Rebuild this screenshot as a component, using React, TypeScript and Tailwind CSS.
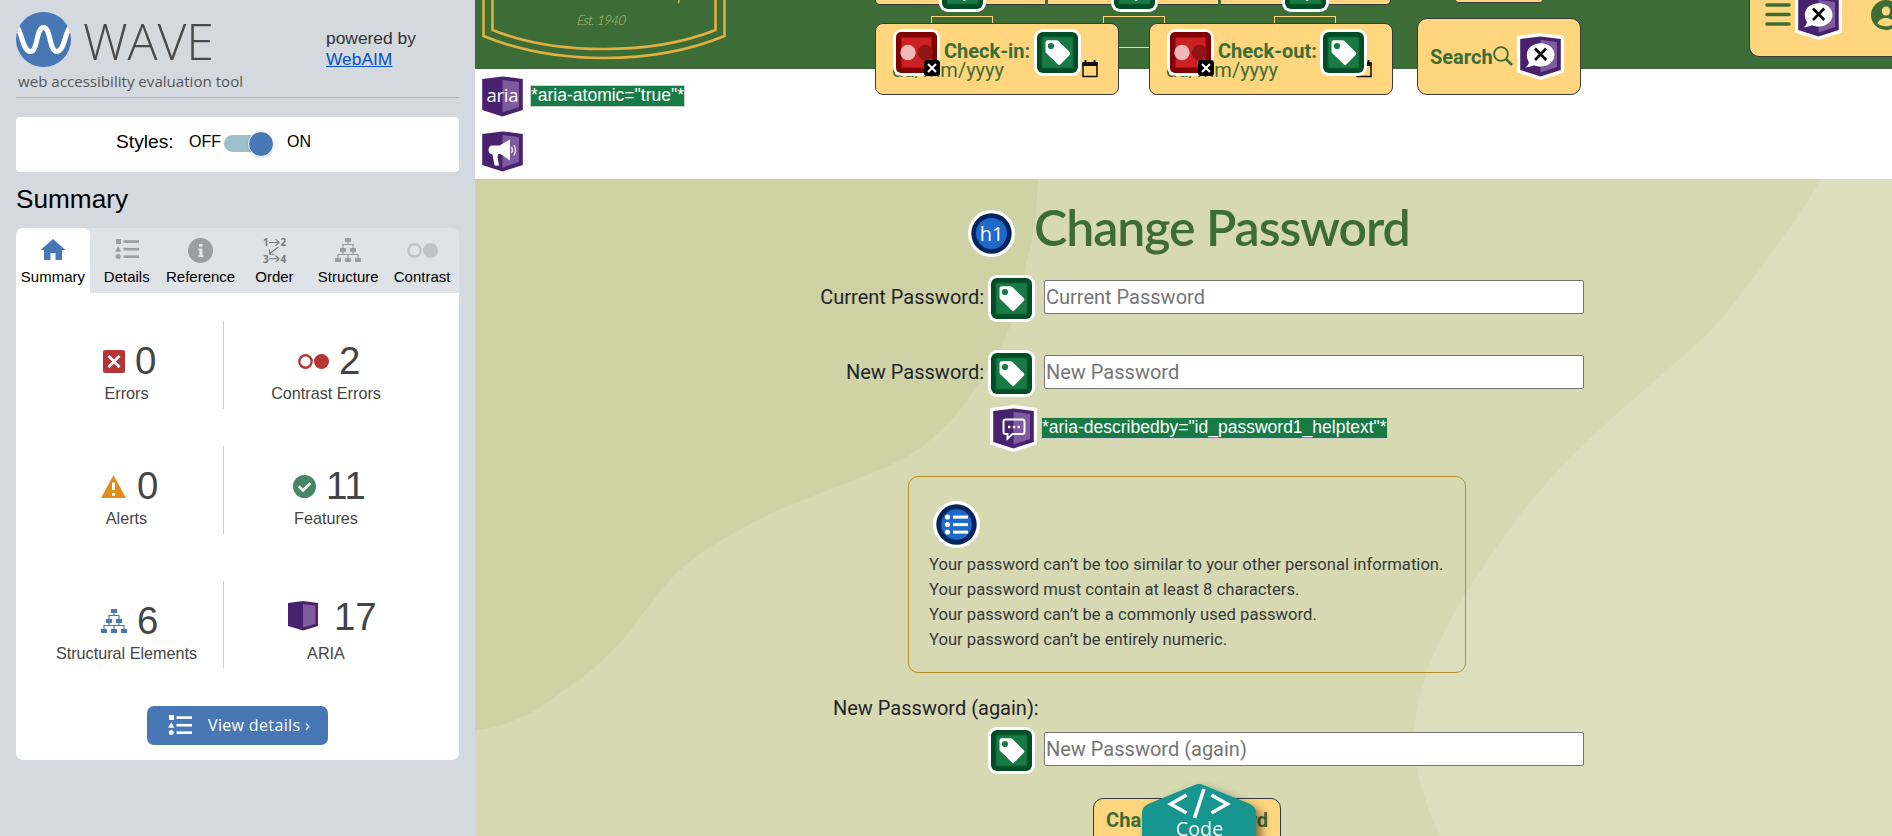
import React from "react";

const arial = "font-['Liberation_Sans',Arial,sans-serif]";
const openSans = "font-['Open_Sans','Noto_Sans',sans-serif]";

/* ---------- annotation icons ---------- */

function TagIcon({ className = "" }: { className?: string }) {
  return (
    <svg viewBox="0 0 47 47" className={`block h-[47px] w-[47px] shrink-0 ${className}`}>
      <rect width="47" height="47" rx="9" fill="#fff" />
      <rect x="3" y="3" width="41" height="41" rx="6" fill="#024c26" />
      <rect x="7.5" y="7.5" width="32" height="32" rx="1.5" fill="#0d6437" />
      <rect x="8.5" y="8.5" width="30" height="30" rx="1" fill="#187b46" />
      <path
        d="M11.5 13.5a2.2 2.2 0 0 1 2.2-2.2h8.7a3 3 0 0 1 2 .8L35.6 23a2.3 2.3 0 0 1 0 3.1l-8.8 9a2.3 2.3 0 0 1-3.3 0L12.4 24.3a3 3 0 0 1-.9-2.1z"
        fill="#fff"
      />
      <circle cx="17" cy="17" r="3.1" fill="#187b46" />
    </svg>
  );
}

function ContrastErrorIcon({ className = "" }: { className?: string }) {
  return (
    <svg viewBox="0 0 47 47" className={`block h-[47px] w-[47px] shrink-0 ${className}`}>
      <rect width="47" height="47" rx="9" fill="#fff" />
      <rect x="3" y="3" width="41" height="41" rx="5" fill="#800204" />
      <rect x="8.5" y="8.5" width="30" height="30" rx="1" fill="#cd2022" />
      <circle cx="15" cy="23.5" r="7.7" fill="#f0b9b9" />
      <circle cx="32.3" cy="23.5" r="7.7" fill="#8e1416" />
      <rect x="31" y="31" width="16" height="16" rx="3" fill="#000" />
      <path d="M35 35l8 8M43 35l-8 8" stroke="#fff" strokeWidth="2" />
    </svg>
  );
}

function AriaShape({ children, className = "" }: { children?: React.ReactNode; className?: string }) {
  return (
    <svg viewBox="0 0 47 47" className={`block h-[47px] w-[47px] shrink-0 ${className}`}>
      <path d="M0 3L23.5 0L47 3V39.5L23.5 47L0 39.5z" fill="#fff" />
      <path d="M3.2 6L23.5 3.4L43.8 6V37L23.5 43.4L3.2 37z" fill="#48226f" />
      <path d="M23.5 7L40 9V34L23.5 39.5z" fill="#7e5a9e" />
      {children}
    </svg>
  );
}

function AriaLabelIcon({ className = "" }: { className?: string }) {
  return (
    <AriaShape className={className}>
      <path
        d="M23.7 10.2c7.8 0 13.8 5 13.8 11.6s-6 11.8-13.8 11.8c-2.6 0-4.700-.5-6.700-1.300-1.800.9-4.800 1.900-8.500 2.100 2-1.500 3.300-3.400 3.500-5.200-1.400-2-2.200-4.600-2.200-7.400 0-6.600 6.100-11.600 13.900-11.600z"
        fill="#fff"
      />
      <path d="M18 15.500l11.200 11.500M29.200 15.500l-11.200 11.500" stroke="#000" strokeWidth="2.6" />
    </AriaShape>
  );
}

/* ---------- sidebar icons ---------- */

function ListShapes({ color, className = "" }: { color: string; className?: string }) {
  return (
    <svg viewBox="0 0 24 20" className={`block h-5 w-6 ${className}`} fill={color}>
      <rect x="1" y="0" width="5" height="5" />
      <path d="M3.200 7.200L6.300 12.700H0z" />
      <circle cx="3.200" cy="17.500" r="2.500" />
      <rect x="8.500" y="1.300" width="15.500" height="2.600" />
      <rect x="8.500" y="8.900" width="15.500" height="2.600" />
      <rect x="8.500" y="16.400" width="15.500" height="2.600" />
    </svg>
  );
}

function TreeIcon({ color }: { color: string }) {
  return (
    <svg viewBox="0 0 26 25" className="block h-[25px] w-[26px]">
      <path
        d="M13 3v3.500M8 12V6.500h10V12M3 21v-4.500h20V21M8 12v5M18 12v5M13 17v5"
        fill="none"
        stroke={color}
        strokeWidth="1.200"
      />
      <g fill={color}>
        <rect x="10" y="0" width="6" height="4" />
        <rect x="5" y="10" width="6" height="4" />
        <rect x="15" y="10" width="6" height="4" />
        <rect x="0" y="20" width="6" height="4" />
        <rect x="10" y="20" width="6" height="4" />
        <rect x="20" y="20" width="6" height="4" />
      </g>
    </svg>
  );
}

function TwoCircles({ color }: { color: string }) {
  return (
    <svg viewBox="0 0 31 15" className="block h-[15px] w-[31px]">
      <circle cx="7.500" cy="7.500" r="6.200" fill="none" stroke={color} strokeWidth="2.400" />
      <circle cx="23.500" cy="7.500" r="7.500" fill={color} />
    </svg>
  );
}

function OrderIcon() {
  return (
    <svg viewBox="0 0 24 26" className="ml-[2px] block h-[26px] w-6">
      <g fill="#76797c" className="font-['Open_Sans',sans-serif] text-[10px] font-bold">
        <text x="0" y="8">1</text>
        <text x="17.500" y="8">2</text>
        <text x="0" y="24.500">3</text>
        <text x="17.500" y="24.500">4</text>
      </g>
      <path
        d="M6 4.500h10M12.500 1.200l3.500 3.300-3.500 3.300M6 20.800h10M12.500 17.500l3.500 3.300-3.500 3.300M15.500 9L6 16M6.500 11.500V16.200h5"
        fill="none"
        stroke="#76797c"
        strokeWidth="1.100"
      />
    </svg>
  );
}

const tabs: { label: string; icon: React.ReactNode; active?: boolean }[] = [
  {
    label: "Summary",
    active: true,
    icon: (
      <svg viewBox="0 0 26 21" className="-mt-[2px] block h-[21px] w-[26px]">
        <path d="M13 0l12.500 11H22v10h-6.500v-7h-5v7H4V11H.5z" fill="#4877b5" />
      </svg>
    ),
  },
  { label: "Details", icon: <ListShapes color="#9b9da0" className="-mt-[4px]" /> },
  {
    label: "Reference",
    icon: (
      <svg viewBox="0 0 25 25" className="block h-[25px] w-[25px]">
        <circle cx="12.500" cy="12.500" r="12.500" fill="#9b9da0" />
        <path d="M11 6h3.500v2.800H11zM10.300 10.500h4.200v6.800h1v1.600h-5.200v-1.600H11.300v-5.200h-1z" fill="#dfe2e7" />
      </svg>
    ),
  },
  { label: "Order", icon: <OrderIcon /> },
  { label: "Structure", icon: <TreeIcon color="#9b9da0" /> },
  { label: "Contrast", icon: <TwoCircles color="#c0c2c5" /> },
];

function Stat({
  icon,
  value,
  label,
  rowClass,
  iconClass,
  labelClass,
}: {
  icon: React.ReactNode;
  value: string;
  label: string;
  rowClass: string;
  iconClass: string;
  labelClass: string;
}) {
  return (
    <div className="text-[#444]">
      <div className={`flex items-start ${rowClass}`}>
        <div className={iconClass}>{icon}</div>
        <div className="pt-px text-[38.4px] leading-[39px]">{value}</div>
      </div>
      <div className={`text-center text-[16.2px] leading-5 ${labelClass}`}>{label}</div>
    </div>
  );
}

function Sidebar() {
  return (
    <aside className={`flex w-[475px] shrink-0 flex-col bg-[#d4d8df] px-4 ${arial}`}>
      <div className="flex h-[98px] w-[443px] items-start border-b border-[#b0b3b4]">
        <div className="w-[310px] pt-3">
          <div className="flex h-[55px] items-start">
            <svg viewBox="0 0 55 55" className="h-[55px] w-[55px]">
              <defs>
                <clipPath id="disc">
                  <circle cx="27.500" cy="27.500" r="27.500" />
                </clipPath>
              </defs>
              <circle cx="27.500" cy="27.500" r="27.500" fill="#4877b5" />
              <path
                d="M-1 14C6 16 6 39.500 14.500 39.500C22 39.500 20 15.500 27.500 15.500C35 15.500 33 39.500 41 39.500C49 39.500 49 16 56 14"
                fill="none"
                stroke="#fff"
                strokeWidth="5"
                clipPath="url(#disc)"
              />
            </svg>
            <span className={`ml-3 -mt-[5px] text-[50px] font-light leading-[68px] tracking-[-0.1px] text-[#4a4a4a] ${openSans}`}>
              WAVE
            </span>
          </div>
          <div className={`ml-[2px] mt-[4px] whitespace-nowrap text-[15.1px] leading-5 text-[#555] ${openSans}`}>
            web accessibility evaluation tool
          </div>
        </div>
        <div className="pt-[28px] text-[17.4px] leading-[21px] text-[#333]">
          powered by
          <br />
          <a className="text-[#0750c4] underline">WebAIM</a>
        </div>
      </div>

      <div className="mt-[19px] flex h-[55px] w-[443px] shrink-0 items-start rounded bg-white pl-[100px] text-black">
        <span className="mt-[14px] w-[58px] text-[19.200px] leading-[22px]">Styles:</span>
        <span className="ml-[15px] mt-[16px] w-[35px] text-base leading-[18px]">OFF</span>
        <span className="relative mt-[18px] h-[17px] w-[48px] rounded-full bg-[#9ec0ca]">
          <span className="absolute -top-[4px] right-[-2px] h-[26px] w-[26px] rounded-full border border-white bg-[#4877b5] shadow-sm" />
        </span>
        <span className="ml-[15px] mt-[16px] text-base leading-[18px]">ON</span>
      </div>

      <h2 className="mt-[12px] h-[30px] shrink-0 text-[26.2px] leading-[30px] text-black">Summary</h2>

      <div className="mt-[14px] flex h-[65px] w-[443px] shrink-0 rounded-t-[7px] bg-[#dfe2e7]">
        {tabs.map((t) => (
          <div
            key={t.label}
            className={`flex flex-1 flex-col items-center text-[15px] leading-[18px] text-black ${
              t.active ? "rounded-t-[7px] bg-white" : ""
            }`}
          >
            <div className="flex h-[45px] items-center justify-center">{t.icon}</div>
            <span className="-mt-[5px]">{t.label}</span>
          </div>
        ))}
      </div>

      <div className="flex h-[467px] w-[443px] shrink-0 flex-col rounded-b-[7px] bg-white pl-[14px] pt-[28px]">
        <div className="flex h-[88px]">
          <div className="w-[193px]">
            <Stat
              rowClass="pt-[19px] pl-[73px]"
              iconClass="mr-[10px] mt-[10px]"
              labelClass="mt-[3px]"
              value="0"
              label="Errors"
              icon={
                <svg viewBox="0 0 22 23" className="h-[23px] w-[22px]">
                  <rect width="22" height="23" rx="2" fill="#b83535" />
                  <path d="M5.500 5.700l11 11.500M16.500 5.700l-11 11.500" stroke="#fff" strokeWidth="2.700" />
                </svg>
              }
            />
          </div>
          <div className="w-[205px] border-l border-[#ccc]">
            <Stat
              rowClass="pt-[19px] pl-[74px]"
              iconClass="mr-[10px] mt-[14px]"
              labelClass="mt-[3px]"
              value="2"
              label="Contrast Errors"
              icon={<TwoCircles color="#b83535" />}
            />
          </div>
        </div>
        <div className="mt-[37px] flex h-[88px]">
          <div className="w-[193px]">
            <Stat
              rowClass="pt-[19px] pl-[71px]"
              iconClass="mr-[11px] mt-[10px]"
              labelClass="mt-[3px]"
              value="0"
              label="Alerts"
              icon={
                <svg viewBox="0 0 25 23" className="h-[23px] w-[25px]">
                  <path d="M12.500 0L25 23H0z" fill="#e28d19" />
                  <path d="M11 7.500h3v7.500h-3zM11 18h3v2.700h-3z" fill="#fff" />
                </svg>
              }
            />
          </div>
          <div className="w-[205px] border-l border-[#ccc]">
            <Stat
              rowClass="pt-[19px] pl-[69px]"
              iconClass="mr-[10px] mt-[10px]"
              labelClass="mt-[3px]"
              value="11"
              label="Features"
              icon={
                <svg viewBox="0 0 23 23" className="h-[23px] w-[23px]">
                  <circle cx="11.500" cy="11.500" r="11.500" fill="#468566" />
                  <path d="M5.800 11.300l4.200 4.200 7.500-7.500" fill="none" stroke="#fff" strokeWidth="2.500" />
                </svg>
              }
            />
          </div>
        </div>
        <div className="mt-[47px] flex h-[87px]">
          <div className="w-[193px]">
            <Stat
              rowClass="pt-[19px] pl-[71px]"
              iconClass="mr-[10px] mt-[9px]"
              labelClass="mt-[3px]"
              value="6"
              label="Structural Elements"
              icon={<TreeIcon color="#4877b5" />}
            />
          </div>
          <div className="w-[205px] border-l border-[#ccc]">
            <Stat
              rowClass="pt-[15px] pl-[64px]"
              iconClass="mr-[16px] mt-[5px]"
              labelClass="mt-[7px]"
              value="17"
              label="ARIA"
              icon={
                <svg viewBox="0 0 30 30" className="h-[30px] w-[30px]">
                  <path d="M0 2L15 0L30 2V25L15 29.500L0 25z" fill="#48226f" />
                  <path d="M15 3L27.500 4.500V23L15 26.500z" fill="#7e5a9e" />
                </svg>
              }
            />
          </div>
        </div>
        <div
          className={`ml-[117px] mt-[38px] flex h-[39px] w-[181px] items-center rounded-[7px] bg-[#4877b5] pl-[21px] text-[16px] text-white ${openSans}`}
        >
          <ListShapes color="#fff" className="-mt-[2px]" />
          <span className="-mt-[2px] ml-4 whitespace-nowrap tracking-[0.35px]">View details ›</span>
        </div>
      </div>
    </aside>
  );
}

/* ---------- site header ---------- */

const card = "border border-[#343a40] bg-[#ffd67d]";

function CalendarIcon({ className = "" }: { className?: string }) {
  return (
    <svg viewBox="0 0 16 18" className={`h-[18px] w-4 ${className}`}>
      <path d="M1 3.500v13h14v-13z" fill="none" stroke="#101010" strokeWidth="1.500" />
      <path d="M.5 2h15v4H.5zM2.500 0h2v3h-2zM11.500 0h2v3h-2z" fill="#101010" />
    </svg>
  );
}

function DateCard({ label, tagClass }: { label: string; tagClass: string }) {
  return (
    <div className={`relative h-[72px] w-[244px] rounded-lg pl-[16px] pt-[15px] text-[#3c6d37] ${card}`}>
      <div className="pl-[52px] text-[20px] font-bold leading-[24px]">{label}</div>
      <div className="-mt-[5px] text-[20px] leading-[24px]">dd/mm/yyyy</div>
      <CalendarIcon className="absolute left-[206px] top-[36px]" />
      <ContrastErrorIcon className="absolute left-[17px] top-[5px]" />
      <TagIcon className={`absolute top-[5px] ${tagClass}`} />
    </div>
  );
}

function LabelFrame({ className }: { className: string }) {
  return (
    <div className={`absolute top-4 h-8 w-[62px] border border-[#ffd67d] ${className}`}>
      <TagIcon className="absolute -top-[52px] left-[7px]" />
    </div>
  );
}

function Header() {
  return (
    <header className="relative z-10 flex h-[69px] shrink-0 items-start bg-[#3c6d37]">
      <svg viewBox="0 0 260 69" className="h-[69px] w-[260px] shrink-0">
        <g fill="none" stroke="#e2b042" strokeWidth="2.600">
          <path d="M8.500 -2V36Q62 58 129 58T249.500 36V-2" />
          <path d="M17.500 -2V30Q65 49 129 49T240.500 30V-2" />
          <path d="M204.500 -1L203.500 3" strokeWidth="1.500" />
        </g>
        <text
          x="102"
          y="25"
          fill="#b3c07c"
          fontStyle="italic"
          textLength="49"
          transform="skewX(-8) translate(3 0)"
          className="font-['Lato',cursive] text-[13.500px] font-light"
        >
          Est. 1940
        </text>
      </svg>

      <div className="relative ml-[140px] w-[518px] shrink-0">
        <LabelFrame className="left-[56px]" />
        <LabelFrame className="left-[228px]" />
        <LabelFrame className="left-[399px]" />
        <div className="flex h-[5px] w-[516px] gap-[3px]">
          <div className="flex-1 rounded-bl-lg border-b border-l border-[#343a40] bg-[#ffd67d]" />
          <div className="flex-1 border-b border-[#343a40] bg-[#ffd67d]" />
          <div className="flex-1 rounded-br-lg border-b border-r border-[#343a40] bg-[#ffd67d]" />
        </div>
        <div className="relative mt-[18px] flex gap-[30px]">
          <DateCard label="Check-in:" tagClass="left-[158px]" />
          <DateCard label="Check-out:" tagClass="left-[170px]" />
        </div>
      </div>

      <div className="ml-[24px] w-[164px] shrink-0">
        <div className="ml-[39px] h-[3px] w-[86px] rounded-b border-b border-[#343a40] bg-[#ffd67d]" />
        <div className={`mt-[15px] flex h-[77px] items-start rounded-[10px] pl-[12px] ${card}`}>
          <span className="mt-[26px] text-[20px] font-bold leading-[24px] text-[#3c6d37]">Search</span>
          <svg viewBox="0 0 20 20" className="mt-[27px] h-5 w-5 shrink-0" fill="none" stroke="#3c6d37" strokeWidth="1.900">
            <circle cx="8" cy="8" r="6.900" />
            <path d="M13 13l6 6" strokeWidth="2.500" />
          </svg>
          <AriaLabelIcon className="ml-[4px] mt-[14px]" />
        </div>
      </div>

      <div className={`ml-[168px] -mt-[20px] flex h-[77px] flex-1 items-start overflow-hidden rounded-bl-[10px] border-r-0 ${card}`}>
        <svg viewBox="0 0 26 24" className="ml-[15px] mt-[22px] h-6 w-[26px] shrink-0" stroke="#3c6d37" strokeWidth="3.600" strokeLinecap="round">
          <path d="M2 2h22M2 11.500h22M2 21h22" />
        </svg>
        <AriaLabelIcon className="ml-[4px] mt-[12px]" />
        <svg viewBox="0 0 30 30" className="ml-[29px] mt-[19px] h-[30px] w-[30px] shrink-0">
          <circle cx="15" cy="15" r="15" fill="#3c6d37" />
          <ellipse cx="15" cy="11" rx="4.200" ry="4.500" fill="#ffd67d" />
          <path d="M6.500 23.500c1.500-4 5-5.500 8.500-5.500s7 1.500 8.500 5.500c-4.500 3.500-12.500 3.500-17 0z" fill="#ffd67d" />
        </svg>
      </div>
    </header>
  );
}

/* ---------- page body ---------- */

function CodeText({ children, className = "" }: { children: React.ReactNode; className?: string }) {
  return (
    <span
      className={`block whitespace-nowrap border border-[#ccc] bg-[#187b46] text-white ${arial} ${className}`}
    >
      {children}
    </span>
  );
}

function PasswordInput({ placeholder }: { placeholder: string }) {
  return (
    <input
      className="ml-[9px] mt-[5px] h-[34px] w-[540px] rounded-[2px] border border-[#767676] bg-white px-px text-[20px] placeholder-[#757575] outline-none"
      placeholder={placeholder}
    />
  );
}

function Field({ label }: { label: string }) {
  return (
    <div className="flex h-[47px] items-start">
      <label className="mt-[10px] w-[509px] text-right text-[20px] leading-6">{label}</label>
      <TagIcon className="ml-[4px]" />
      <PasswordInput placeholder={label.replace(":", "")} />
    </div>
  );
}

function Backdrop() {
  return (
    <svg viewBox="475 179 1417 657" className="absolute inset-0 h-full w-full" preserveAspectRatio="none">
      <path
        d="M475 179H1038C1037 215 1033 240 1026 264C1023 290 1018 308 1008 331C1000 350 993 362 980 381C968 400 960 412 944 427C925 447 905 459 881 469C860 478 840 485 818 494C790 505 765 515 745 527C720 541 705 549 691 561C675 573 665 585 655 598C640 617 628 637 610 653C595 668 582 678 564 690C550 701 535 712 519 718C503 726 490 729 475 730z"
        fill="#cfd2a5"
      />
      <path
        d="M1821 179C1810 198 1800 214 1785 234C1765 262 1745 291 1722 318C1700 343 1675 363 1650 385C1618 412 1587 440 1559 469C1535 495 1515 520 1496 548C1480 571 1464 595 1451 619C1440 640 1430 660 1424 682C1419 698 1415 715 1414 732C1414 748 1416 764 1419 778C1424 798 1431 817 1440 836H1892V179z"
        fill="#dcdfbe"
      />
    </svg>
  );
}

const rules = [
  "Your password can’t be too similar to your other personal information.",
  "Your password must contain at least 8 characters.",
  "Your password can’t be a commonly used password.",
  "Your password can’t be entirely numeric.",
];

function PasswordPage() {
  return (
    <section className="relative h-[657px] shrink-0 overflow-hidden bg-[#d7d9b2] text-[#212529]">
      <Backdrop />
      <div className="relative flex flex-col">
        <div className="flex h-[96px] items-start pl-[493px]">
          <svg viewBox="0 0 47 47" className="mt-[31px] h-[47px] w-[47px] shrink-0">
            <circle cx="23.500" cy="23.500" r="23.500" fill="#fff" />
            <circle cx="23.500" cy="23.500" r="20.200" fill="#02265c" />
            <circle cx="23.500" cy="23.500" r="15.500" fill="#1f69cb" />
            <text x="23.500" y="31" textAnchor="middle" fill="#fff" className="font-['Open_Sans',sans-serif] text-[20px]">
              h1
            </text>
          </svg>
          <h1 className="ml-[19px] mt-[15px] whitespace-nowrap font-['Lato',sans-serif] text-[50px] font-semibold leading-[66px] tracking-[-1.05px] text-[#3c6d37]">
            Change Password
          </h1>
        </div>

        <Field label="Current Password:" />
        <div className="mt-[28px]">
          <Field label="New Password:" />
        </div>

        <div className="ml-[515px] mt-[8px] flex h-[47px] items-start">
          <AriaShape>
            <path
              d="M15.500 14.500h17a2 2 0 0 1 2 2v10.500a2 2 0 0 1-2 2H22.500l-5 4.700v-4.700h-2a2 2 0 0 1-2-2V16.500a2 2 0 0 1 2-2z"
              fill="none"
              stroke="#fff"
              strokeWidth="2"
            />
            <path d="M18 20.800h2.400v2.400H18zM22.800 20.800h2.400v2.400h-2.400zM27.600 20.800H30v2.400h-2.400z" fill="#fff" />
          </AriaShape>
          <CodeText className="ml-[4px] mt-[12px] h-[22px] text-[17.500px] leading-[19px]">
            *aria-describedby="id_password1_helptext"*
          </CodeText>
        </div>

        <div className="ml-[433px] mt-[24px] h-[197px] w-[558px] rounded-[10px] border border-[#b98d27] pl-[20px] pt-[24px]">
          <svg viewBox="0 0 47 47" className="ml-[4px] h-[47px] w-[47px]">
            <circle cx="23.500" cy="23.500" r="23.500" fill="#fff" />
            <circle cx="23.500" cy="23.500" r="20.200" fill="#02265c" />
            <circle cx="23.500" cy="23.500" r="15.300" fill="#1f69cb" />
            <g fill="#fff">
              <circle cx="14.500" cy="16" r="2.600" />
              <circle cx="14.500" cy="23.500" r="2.600" />
              <circle cx="14.500" cy="31" r="2.600" />
              <rect x="20" y="14.600" width="15" height="3" />
              <rect x="20" y="22.100" width="15" height="3" />
              <rect x="20" y="29.600" width="15" height="3" />
            </g>
          </svg>
          <ul className="mt-[4px] whitespace-nowrap text-[16.640px] leading-[25px] text-[#343a40]">
            {rules.map((r) => (
              <li key={r}>{r}</li>
            ))}
          </ul>
        </div>

        <div className="ml-[358px] mt-[23px] text-[20px] leading-6">New Password (again):</div>
        <div className="mt-[7px] flex h-[47px] items-start pl-[513px]">
          <TagIcon />
          <PasswordInput placeholder="New Password (again)" />
        </div>

        <div className={`relative ml-[618px] mt-[24px] h-[50px] w-[188px] rounded-[10px] pt-[9px] text-center text-[20px] font-bold leading-6 text-[#3c6d37] ${card}`}>
          Change Password
          <div className="absolute -top-[15px] left-[48px] h-[130px] w-[114px] drop-shadow-[5px_5px_5px_rgba(0,0,0,0.5)]">
            <svg viewBox="0 0 115 130" preserveAspectRatio="none" className="h-full w-full">
              <path
                d="M53 1Q57.500 -1 62 1L109 20Q115 23 115 29V101Q115 107 109 110L57.500 130L6 110Q0 107 0 101V29Q0 23 6 20z"
                fill="#17968f"
              />
              <path d="M45 11L29 20L45 29M70 11L86 20L70 29M62.500 5L53 34" fill="none" stroke="#fff" strokeWidth="3.600" />
              <text x="58" y="52" textAnchor="middle" fill="#fff" className="font-['Open_Sans',sans-serif] text-[20px] font-normal">
                Code
              </text>
            </svg>
          </div>
        </div>
      </div>
    </section>
  );
}

export default function App() {
  return (
    <div className="flex h-[836px] w-[1892px] overflow-hidden bg-white font-['Roboto',sans-serif]">
      <Sidebar />
      <main className="flex min-w-0 flex-1 flex-col">
        <Header />
        <section className="flex h-[110px] shrink-0 flex-col pl-[4px] pt-[4px]">
          <div className="flex h-[47px] items-start">
            <AriaShape>
              <text x="23.500" y="28.500" textAnchor="middle" textLength="32" fill="#fff" className="font-['Open_Sans',sans-serif] text-[18.500px]">
                aria
              </text>
            </AriaShape>
            <CodeText className="ml-[4px] mt-[12px] h-[22px] text-[17.500px] leading-[19px]">*aria-atomic="true"*</CodeText>
          </div>
          <AriaShape className="mt-[8px]">
            <path d="M31 11.500V32.500L21.500 26H19.500L18.500 29L20 37.500H15.500L13.500 26.500C8 26 8.500 17.500 13.500 17.500H20.500z" fill="#fff" />
            <path d="M32.500 19q1.800 3 0 6M34.800 17q3.400 5 0 10.500" fill="none" stroke="#fff" strokeWidth="1.200" />
          </AriaShape>
        </section>
        <PasswordPage />
      </main>
    </div>
  );
}
